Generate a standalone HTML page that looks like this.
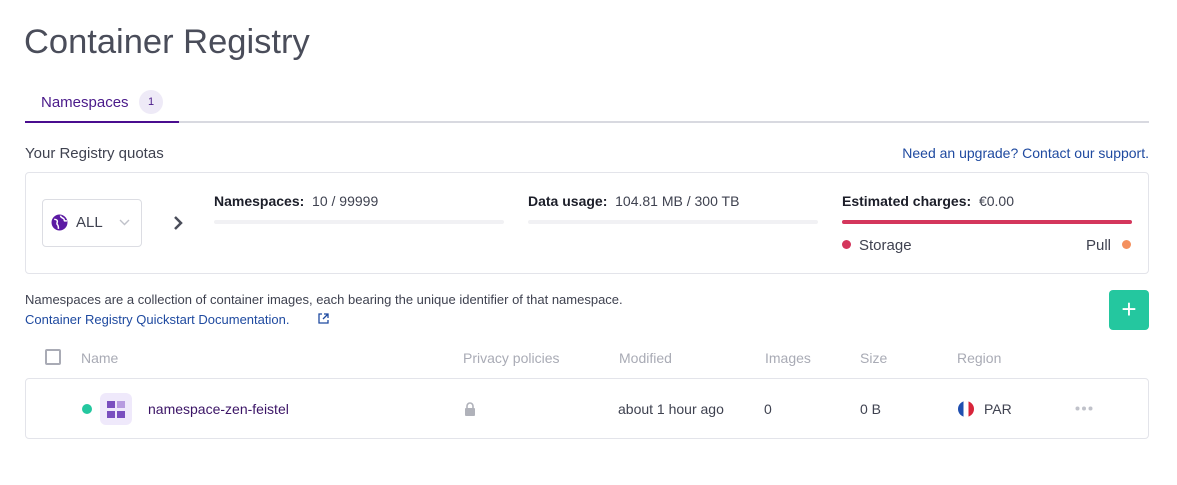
<!DOCTYPE html>
<html><head><meta charset="utf-8"><style>
*{box-sizing:border-box;margin:0;padding:0}
body{width:1177px;height:485px;background:#fff;font-family:"Liberation Sans",sans-serif;color:#3f4250;position:relative;overflow:hidden;font-size:14px}
.a{position:absolute;white-space:nowrap}
.hd{color:#a9abb5;font-size:14px}
</style></head><body>
<div class="a" style="left:24px;top:23px;font-size:34.5px;color:#4a4d5a">Container Registry</div>
<div class="a" style="left:41px;top:94px;font-size:15px;color:#4a1a8a">Namespaces</div>
<div class="a" style="left:139px;top:90px;width:24px;height:24px;border-radius:12px;background:#eeeaf7;color:#4a1a8a;font-size:11px;text-align:center;line-height:24px">1</div>
<div class="a" style="left:25px;top:121px;width:1124px;height:2px;background:#d8d9e0"></div>
<div class="a" style="left:25px;top:121px;width:154px;height:2px;background:#4a0d8f"></div>
<div class="a" style="left:25px;top:145px;font-size:15px">Your Registry quotas</div>
<div class="a" style="right:28px;top:145px;font-size:14px;color:#1f4aa0">Need an upgrade? Contact our support.</div>
<div class="a" style="left:25px;top:172px;width:1124px;height:102px;border:1px solid #e3e4ea;border-radius:4px"></div>
<div class="a" style="left:42px;top:199px;width:100px;height:48px;border:1px solid #dcdde3;border-radius:4px"></div>
<svg class="a" style="left:51px;top:214px" width="17" height="17" viewBox="0 0 16 16"><circle cx="8" cy="8" r="7.5" fill="#5b1aa3"/><path d="M3 5c2 0 3 1 3 2s-1 2 0 3 1 3 1 4M9 1.5c0 2 2 2 3 3s0 2 1 2 2 0 2 0" stroke="#fff" stroke-width="1.4" fill="none"/></svg>
<div class="a" style="left:76px;top:214px;font-size:15px">ALL</div>
<svg class="a" style="left:119px;top:219px" width="11" height="7" viewBox="0 0 11 7"><path d="M1 1l4.5 4.5L10 1" stroke="#c0c2ca" stroke-width="1.4" fill="none"/></svg>
<svg class="a" style="left:172px;top:215px" width="12" height="16" viewBox="0 0 12 16"><path d="M3 2l6 6-6 6" stroke="#4a4d5a" stroke-width="2.5" fill="none"/></svg>
<div class="a" style="left:214px;top:193px;font-size:14px"><b style="color:#1c1e29">Namespaces:</b>&nbsp; 10 / 99999</div>
<div class="a" style="left:214px;top:220px;width:290px;height:4px;background:#f1f1f4;border-radius:2px"></div>
<div class="a" style="left:528px;top:193px;font-size:14px"><b style="color:#1c1e29">Data usage:</b>&nbsp; 104.81 MB / 300 TB</div>
<div class="a" style="left:528px;top:220px;width:290px;height:4px;background:#f1f1f4;border-radius:2px"></div>
<div class="a" style="left:842px;top:193px;font-size:14px"><b style="color:#1c1e29">Estimated charges:</b>&nbsp; €0.00</div>
<div class="a" style="left:842px;top:220px;width:290px;height:4px;background:#d4365c;border-radius:2px"></div>
<div class="a" style="left:842px;top:240px;width:9px;height:9px;border-radius:5px;background:#d4365c"></div>
<div class="a" style="left:859px;top:237px;font-size:15px">Storage</div>
<div class="a" style="left:1086px;top:237px;font-size:15px">Pull</div>
<div class="a" style="left:1122px;top:240px;width:9px;height:9px;border-radius:5px;background:#f4905e"></div>
<div class="a" style="left:25px;top:292px;font-size:13px">Namespaces are a collection of container images, each bearing the unique identifier of that namespace.</div>
<div class="a" style="left:25px;top:312px;font-size:13px;color:#1f4aa0">Container Registry Quickstart Documentation.</div>
<svg class="a" style="left:318px;top:313px" width="11" height="11" viewBox="0 0 11 11"><path d="M4 1H1v9h9V7M6 1h4v4M10 1L5 6" stroke="#1f4aa0" stroke-width="1.3" fill="none"/></svg>
<div class="a" style="left:1109px;top:290px;width:40px;height:40px;border-radius:4px;background:#24c79f;color:#fff;font-size:26px;text-align:center;line-height:38px">+</div>
<div class="a" style="left:45px;top:349px;width:16px;height:16px;border:2px solid #a9abb5;border-radius:2px"></div>
<div class="a hd" style="left:81px;top:350px">Name</div>
<div class="a hd" style="left:463px;top:350px">Privacy policies</div>
<div class="a hd" style="left:619px;top:350px">Modified</div>
<div class="a hd" style="left:765px;top:350px">Images</div>
<div class="a hd" style="left:860px;top:350px">Size</div>
<div class="a hd" style="left:957px;top:350px">Region</div>
<div class="a" style="left:25px;top:378px;width:1124px;height:61px;border:1px solid #e3e4ea;border-radius:4px"></div>
<div class="a" style="left:82px;top:404px;width:10px;height:10px;border-radius:5px;background:#24c79f"></div>
<div class="a" style="left:100px;top:393px;width:32px;height:32px;border-radius:6px;background:#efe9fb"></div>
<svg class="a" style="left:106px;top:400px" width="20" height="19" viewBox="0 0 20 19"><rect x="1" y="1" width="8" height="7" fill="#7a4fbf"/><rect x="11" y="1" width="8" height="7" fill="#b79be0"/><rect x="1" y="11" width="8" height="7" fill="#7a4fbf"/><rect x="11" y="11" width="8" height="7" fill="#7a4fbf"/></svg>
<div class="a" style="left:148px;top:401px;font-size:14px;color:#3b1466">namespace-zen-feistel</div>
<svg class="a" style="left:464px;top:402px" width="12" height="14" viewBox="0 0 12 14"><path d="M3 6V4a3 3 0 016 0v2" stroke="#b0b2ba" stroke-width="1.6" fill="none"/><rect x="1" y="6" width="10" height="8" rx="1" fill="#b0b2ba"/></svg>
<div class="a" style="left:618px;top:401px">about 1 hour ago</div>
<div class="a" style="left:764px;top:401px">0</div>
<div class="a" style="left:860px;top:401px">0 B</div>
<svg class="a" style="left:958px;top:401px" width="16" height="16" viewBox="0 0 16 16"><clipPath id="c"><circle cx="8" cy="8" r="8"/></clipPath><g clip-path="url(#c)"><rect width="6" height="16" fill="#1f4fb0"/><rect x="5.5" width="5" height="16" fill="#fff"/><rect x="10.5" width="6" height="16" fill="#d8243a"/></g></svg>
<div class="a" style="left:984px;top:401px">PAR</div>
<svg class="a" style="left:1075px;top:406px" width="18" height="5" viewBox="0 0 18 5"><circle cx="2.5" cy="2.5" r="2" fill="#c0c2ca"/><circle cx="9" cy="2.5" r="2" fill="#c0c2ca"/><circle cx="15.5" cy="2.5" r="2" fill="#c0c2ca"/></svg>
</body></html>
